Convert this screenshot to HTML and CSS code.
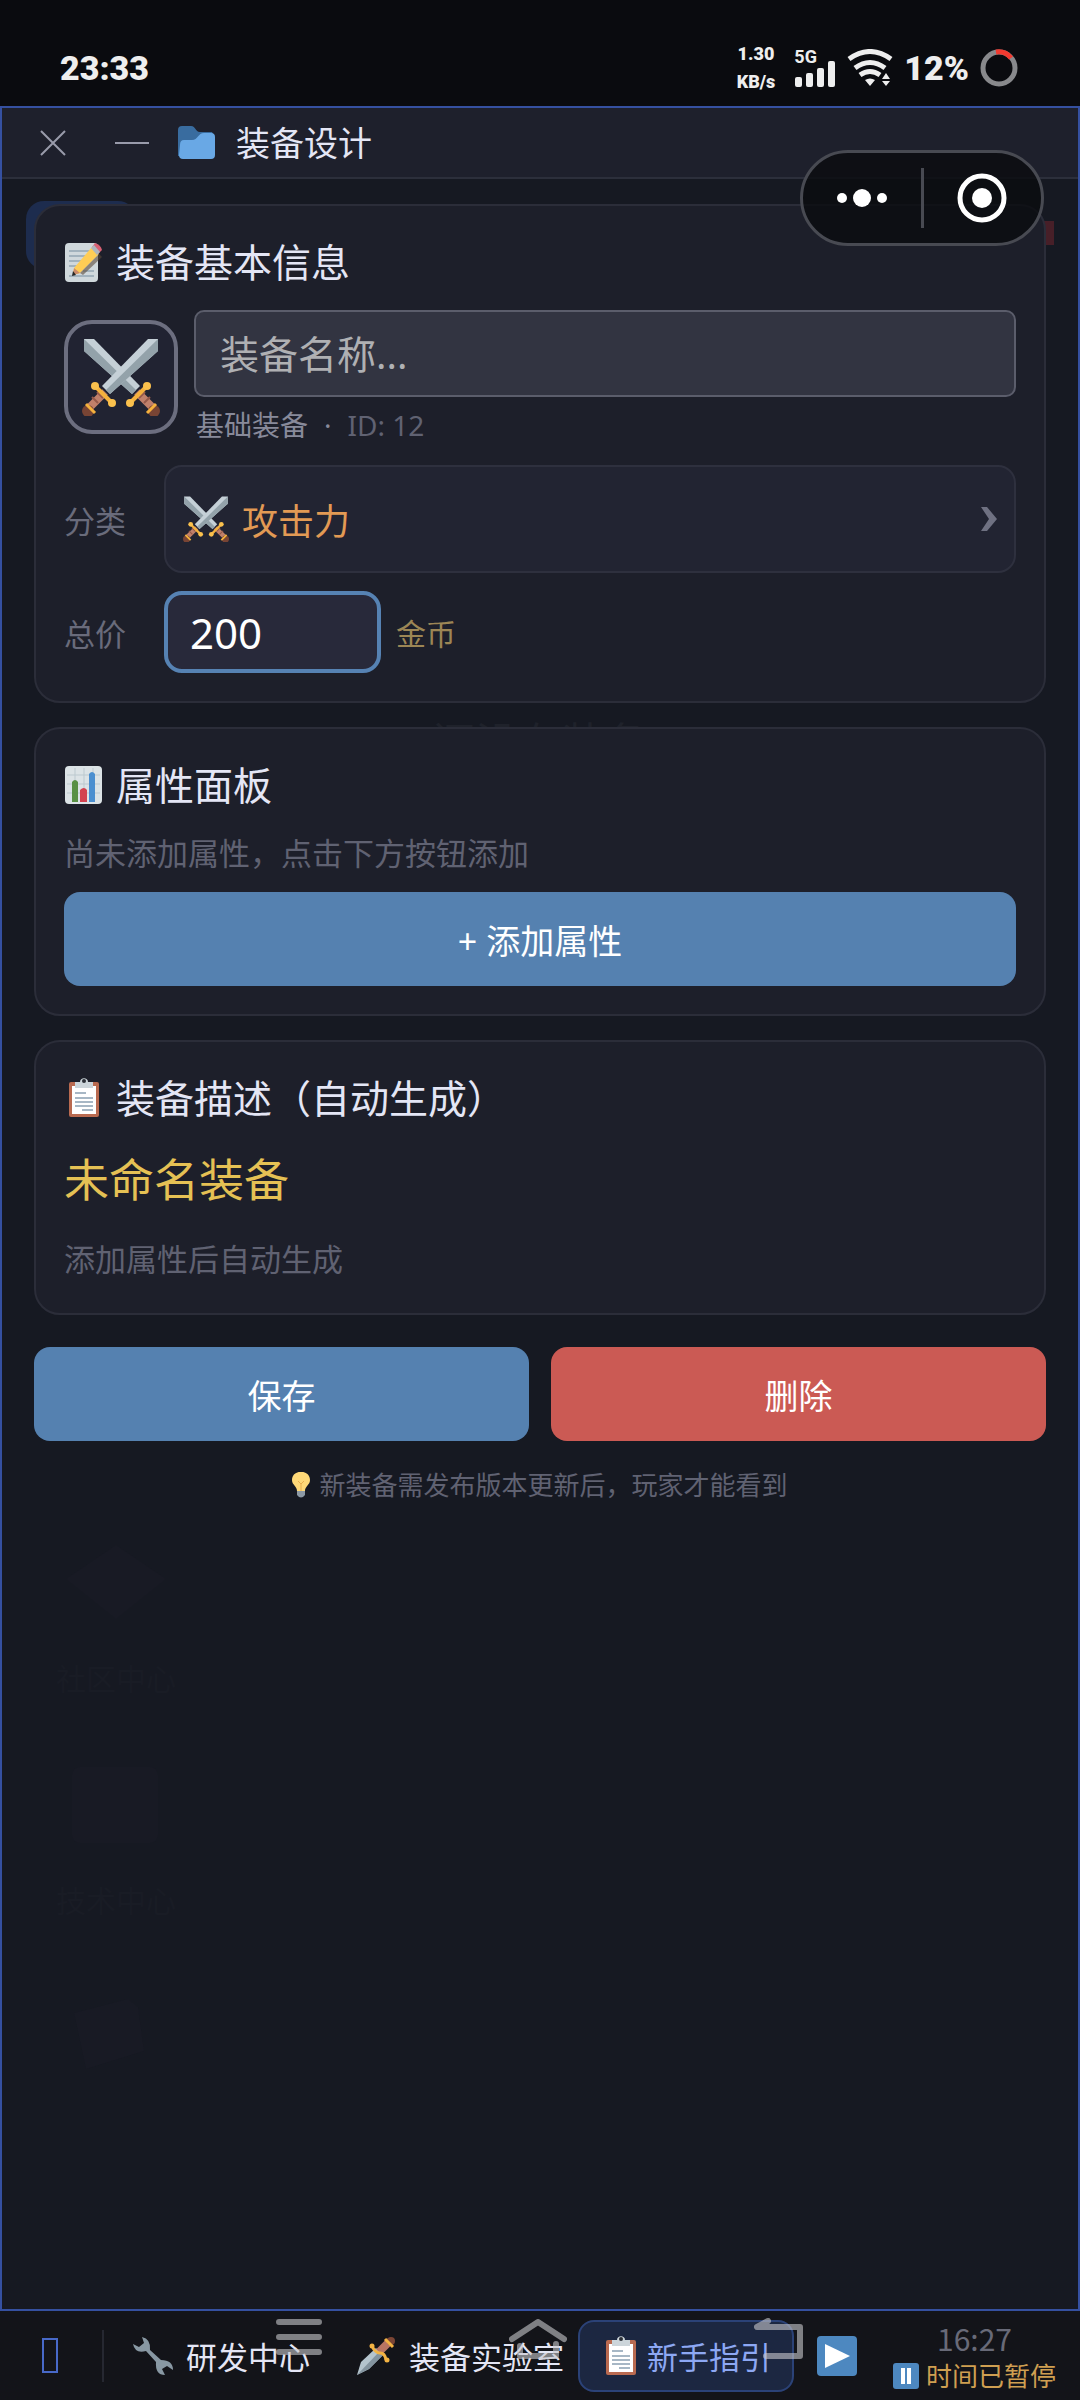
FILE: index.html
```
<!DOCTYPE html>
<html lang="zh-CN">
<head>
  <meta charset="UTF-8" />
  <meta name="viewport" content="width=device-width, initial-scale=1.0"/>
  <title>装备设计</title>
  <link rel="stylesheet" href="styles.css">
</head>
<body>
  <svg class="defs" aria-hidden="true">
    <symbol id="swords" viewBox="0 0 78 78">
      <path d="M2 1h10l46 47-8 8L2 13z" fill="#c5d0d7"/>
      <path d="M2 1v12l48 43 4-4z" fill="#93a2aa"/>
      <path d="M55 54l15 15" stroke="#c0806b" stroke-width="8"/>
      <path d="M57 60l6-6M62 65l6-6" stroke="#96594a" stroke-width="2"/>
      <path d="M48 65l18-18" stroke="#f5b13d" stroke-width="4"/>
      <circle cx="48" cy="65" r="4" fill="#fbc14d"/><circle cx="65" cy="48" r="4" fill="#fbc14d"/>
      <circle cx="72" cy="73" r="6" fill="#784434"/>
      <path d="M65 75l9-9" stroke="#f5b13d" stroke-width="3"/>
      <path d="M76 1H66L20 48l8 8 48-43z" fill="#c5d0d7"/>
      <path d="M76 1v12L28 56l-4-4z" fill="#93a2aa"/>
      <path d="M23 54L8 69" stroke="#c0806b" stroke-width="8"/>
      <path d="M21 60l-6-6M16 65l-6-6" stroke="#96594a" stroke-width="2"/>
      <path d="M30 65L12 47" stroke="#f5b13d" stroke-width="4"/>
      <circle cx="30" cy="65" r="4" fill="#fbc14d"/><circle cx="13" cy="48" r="4" fill="#fbc14d"/>
      <circle cx="6" cy="73" r="6" fill="#784434"/>
      <path d="M13 75l-9-9" stroke="#f5b13d" stroke-width="3"/>
    </symbol>
    <symbol id="clipboard" viewBox="0 0 40 40">
      <rect x="5" y="4" width="30" height="35" rx="2" fill="#b96a50"/>
      <path d="M8 8h24v28H8z" fill="#fff"/>
      <path d="M11 4h5c0-5 8-5 8 0h5v6H11z" fill="#ccd5da"/>
      <circle cx="20" cy="3" r="2" fill="#2b2f36"/>
      <path d="M11 15h11M11 20h18M11 24h18M11 28h18M18 32h11" stroke="#8ba0b3" stroke-width="1.5"/>
    </symbol>
  </svg>

  <header class="status-bar">
    <span class="clock">23:33</span>
    <div class="status-right">
      <div class="speed"><span>1.30</span><span>KB/s</span></div>
      <div class="signal">
        <span>5G</span>
        <svg width="42" height="26" viewBox="0 0 42 26" fill="#eee">
          <rect x="1" y="16" width="7" height="10" rx="2"/><rect x="12" y="12" width="7" height="14" rx="2"/>
          <rect x="23" y="7" width="7" height="19" rx="2"/><rect x="34" y="0" width="7" height="26" rx="2"/>
        </svg>
      </div>
      <svg width="46" height="38" viewBox="0 0 46 38" fill="none" stroke="#eee" stroke-width="5">
        <path d="M2 10Q23-5 44 10M8 19q15-11 30 0M13 26q10-7 20 0"/>
        <path d="M18 31q5-3 10 0l-5 6zM35 30l4-6 4 6zM35 32l4 5 4-5z" fill="#eee" stroke="none"/>
      </svg>
      <span class="battery">12%</span>
      <svg width="38" height="38" viewBox="0 0 38 38" fill="none" stroke-width="5">
        <circle cx="19" cy="19" r="16" stroke="#88898c"/>
        <path d="M16 3a16 16 0 0 1 15 6" stroke="#f23a30"/>
      </svg>
    </div>
  </header>

  <main class="window">
    <div class="title-bar">
      <button class="win-btn" aria-label="关闭"><svg width="26" height="26" viewBox="0 0 26 26"><path d="M1 1l24 24M25 1L1 25"/></svg></button>
      <button class="win-btn minimize" aria-label="最小化"><svg width="34" height="26" viewBox="0 0 34 26"><path d="M0 13h34"/></svg></button>
      <svg width="38" height="34" viewBox="0 0 38 34">
        <path d="M4 0h9c5 0 4 6 9 6h12l2 4v20H0V4q0-4 4-4z" fill="#396c9f"/>
        <path d="M2 19q0-5 4-5h8c6 0 6-7 12-7h7q4 0 4 4v18q0 4-4 4H5q-4 0-4-4z" fill="#69a8e5"/>
      </svg>
      <h1>装备设计</h1>
    </div>

    <!-- dimmed desktop under the window -->
    <div class="desktop" aria-hidden="true">
      <div class="ghost-tab"></div>
      <div class="ghost-flag"></div>
      <div class="ghost-empty">还没有装备</div>
      <div class="ghost-app app-community"><svg width="100" height="76" viewBox="0 0 100 76"><path d="M0 34L50 0l50 34-50 40z"/></svg>社区中心</div>
      <div class="ghost-app app-tech"><svg width="100" height="76" viewBox="0 0 100 76"><rect x="6" width="86" height="76" rx="8"/></svg>技术中心</div>
      <div class="ghost-app app-tag"><svg width="100" height="76" viewBox="0 0 100 76"><path d="M8 18L62 4l10 8 6 44L20 74z"/></svg></div>
    </div>

    <div class="content">
      <section class="card">
        <h2>
          <svg width="40" height="40" viewBox="0 0 40 40">
            <rect x="1" y="1" width="33" height="39" rx="4" fill="#d0d8dc"/>
            <path d="M5 9h21M5 14h17M5 19h14M5 24h9M19 29h11M5 34h25" stroke="#92a5b2" stroke-width="1.5"/>
            <path d="M10 26L28 5l7 7-19 19-7 2z" fill="#ffcd55"/>
            <path d="M16 31L35 12l3 3-19 18z" fill="#5a4a3a" opacity=".6"/>
            <path d="M28 5l3-4q6 2 7 7l-4 4z" fill="#d96073"/><path d="M27 6l3-3 6 7-3 3z" fill="#aeb6bd"/>
            <path d="M10 26l6 5-7 2z" fill="#cb8a68"/><path d="M9 29l3 4-4 1z" fill="#252525"/>
          </svg>
          装备基本信息
        </h2>
        <div class="profile">
          <button class="equip-icon" aria-label="装备图标"><svg width="78" height="78"><use href="#swords"/></svg></button>
          <div class="profile-info">
            <input class="name-input" type="text" placeholder="装备名称..." aria-label="装备名称">
            <div class="meta"><span>基础装备</span><span>·</span><span class="meta-id">ID: 12</span></div>
          </div>
        </div>
        <div class="row row-category">
          <label for="category">分类</label>
          <button class="category" id="category">
            <svg width="46" height="46"><use href="#swords"/></svg>
            攻击力
            <svg class="chevron" width="16" height="26" viewBox="0 0 16 26"><path d="M0 1h6l10 12L6 25H0l8-12z" fill="#6f7182"/></svg>
          </button>
        </div>
        <div class="row row-price">
          <label for="price">总价</label>
          <input class="price-input" id="price" type="text" inputmode="numeric" value="200">
          <span class="unit">金币</span>
        </div>
      </section>

      <section class="card">
        <h2>
          <svg width="40" height="40" viewBox="0 0 40 40">
            <rect x="1" y="1" width="37" height="38" rx="4" fill="#dce3e6"/>
            <path d="M3 10h33M3 19h33M3 28h33M11 3v34M20 3v34M29 3v34" stroke="#bcc9cf"/>
            <path d="M8 37V17q3-4 6 0v20z" fill="#599044"/><path d="M16 37V25q4-4 7 0v12z" fill="#d3424f"/><path d="M25 37V9q3-4 6 0v28z" fill="#4b8fd0"/>
          </svg>
          属性面板
        </h2>
        <p class="muted">尚未添加属性，点击下方按钮添加</p>
        <button class="btn add-btn">+ 添加属性</button>
      </section>

      <section class="card">
        <h2><svg width="40" height="40"><use href="#clipboard"/></svg>装备描述（自动生成）</h2>
        <p class="equip-name">未命名装备</p>
        <p class="muted">添加属性后自动生成</p>
      </section>

      <div class="actions">
        <button class="btn">保存</button>
        <button class="btn danger">删除</button>
      </div>
      <p class="hint">
        <svg width="18" height="26" viewBox="0 0 18 26"><path d="M5 19C5 14 0 13 0 8 0-3 18-3 18 8c0 5-5 6-5 11z" fill="#ffd978"/><path d="M6 9l3 3 3-3M9 12v7" fill="none" stroke="#e8ae4e"/><path d="M5 19h8v4q-4 5-8 0z" fill="#8c99a5"/></svg>
        新装备需发布版本更新后，玩家才能看到
      </p>
    </div>
  </main>

  <div class="capsule">
    <button aria-label="更多"><svg width="52" height="20" viewBox="0 0 52 20" fill="#fff"><circle cx="6" cy="10" r="5"/><circle cx="26" cy="10" r="9"/><circle cx="46" cy="10" r="5"/></svg></button>
    <button aria-label="关闭小程序"><svg width="50" height="50" viewBox="0 0 50 50"><circle cx="25" cy="25" r="22" fill="none" stroke="#fff" stroke-width="5"/><circle cx="25" cy="25" r="10" fill="#fff"/></svg></button>
  </div>

  <footer class="taskbar">
    <button class="start" aria-label="开始"><svg width="16" height="36" viewBox="0 0 16 36"><rect x="1" y="1" width="14" height="33" fill="none" stroke="#4869c8" stroke-width="2"/></svg></button>
    <button class="task">
      <svg width="40" height="40" viewBox="0 0 40 40"><path d="M9 1q9 2 8 13l11 10q12 0 12 10l-6-4-5 3 3 6q-10 0-9-13L13 15Q2 18 0 8l6 3 5-4z" fill="#8898a3"/></svg>
      研发中心
    </button>
    <button class="task">
      <svg width="40" height="40" viewBox="0 0 40 40">
        <path d="M1 39l4-13 15-14 7 7-14 14z" fill="#b4c4cd"/><path d="M1 39L23 16l4 3-14 14z" fill="#84949f"/>
        <path d="M23 16L34 5" stroke="#b87563" stroke-width="8"/><circle cx="35" cy="5" r="4" fill="#7b4535"/>
        <path d="M16 10q3 7 8 7t6 7M29 3l8 8" fill="none" stroke="#f3b343" stroke-width="3"/><circle cx="16" cy="10" r="2.5" fill="#f3b343"/><circle cx="31" cy="24" r="2.5" fill="#f3b343"/>
      </svg>
      装备实验室
    </button>
    <button class="task active"><svg width="40" height="40"><use href="#clipboard"/></svg>新手指引</button>
    <button class="play" aria-label="继续"><svg width="40" height="40" viewBox="0 0 40 40"><rect width="40" height="40" rx="4" fill="#4d88c0"/><path d="M8 8l25 12L8 32z" fill="#fff"/></svg></button>
    <div class="tray">
      <span class="tray-time">16:27</span>
      <span class="tray-state"><svg width="26" height="26" viewBox="0 0 26 26"><rect width="26" height="26" rx="3" fill="#4d88c0"/><path d="M10 5v16M16 5v16" stroke="#fff" stroke-width="4"/></svg>时间已暂停</span>
    </div>
    <nav class="sys-nav">
      <svg width="46" height="44" viewBox="0 0 46 44"><path d="M3 4h40M3 19h40M3 34h40"/></svg>
      <svg width="60" height="44" viewBox="0 0 60 44"><path d="M4 21L30 4l26 17M12 28v10h36V26"/></svg>
      <svg width="50" height="44" viewBox="0 0 50 44"><path d="M14 3L3 9h43v29H12"/></svg>
    </nav>
  </footer>
</body>
</html>
```
FILE: styles.css
```
* {
  box-sizing: border-box;
}

body {
  margin: 0;
  min-height: 100vh;
  display: flex;
  flex-direction: column;
  position: relative;
  background: #161922;
  color: #e4e6f5;
  font-family: "Noto Sans", "Noto Sans CJK SC", sans-serif;
}

button, input {
  font-family: inherit;
  margin: 0;
}

button {
  border: none;
  background: none;
  padding: 0;
  color: inherit;
}

h1, h2, p {
  margin: 0;
  font-weight: 400;
}

svg {
  display: block;
  flex-shrink: 0;
}

.defs {
  position: absolute;
  width: 0;
  height: 0;
}

/* phone status bar */
.status-bar {
  height: 106px;
  padding: 36px 62px 0 60px;
  display: flex;
  justify-content: space-between;
  align-items: flex-start;
  background: #0a0b0f;
  color: #eee;
  font-family: Roboto, sans-serif;
  font-weight: 900;
}

.clock, .battery {
  font-size: 34px;
  line-height: 64px;
}

.status-right {
  display: flex;
  align-items: center;
  gap: 11px;
}

.speed {
  display: flex;
  flex-direction: column;
  align-items: center;
  margin-right: 8px;
  font-size: 18px;
  line-height: 28px;
}

.signal {
  padding-top: 2px;
  font-size: 18px;
  font-weight: 700;
  line-height: 12px;
}

.signal svg {
  margin-top: -2px;
}

/* window */
.window {
  flex: 1;
  position: relative;
  border: 2px solid #3550a0;
}

.title-bar {
  display: flex;
  align-items: center;
  height: 71px;
  padding: 0 38px;
  background: #1e202c;
  border-bottom: 2px solid #2c2f3b;
}

.title-bar h1 {
  margin-left: 20px;
  font-size: 34px;
  line-height: 48px;
}

.win-btn svg {
  fill: none;
  stroke: #999bab;
  stroke-width: 2;
}

.minimize {
  margin: 0 29px 0 49px;
}

.desktop {
  position: absolute;
  inset: 71px 0 0 0;
  overflow: hidden;
  font-size: 30px;
  line-height: 44px;
  color: #191c25;
}

.desktop > div {
  position: absolute;
}

.ghost-tab {
  left: 24px;
  top: 22px;
  width: 110px;
  height: 68px;
  border-radius: 18px;
  background: #1d2c4e;
}

.ghost-flag {
  right: 24px;
  top: 42px;
  width: 12px;
  height: 24px;
  background: #471f28;
}

.ghost-empty {
  width: 100%;
  top: 542px;
  text-align: center;
  font-size: 43px;
  color: #1f222b;
}

.ghost-app {
  left: 54px;
}

.ghost-app svg {
  margin: 0 0 36px 10px;
  fill: #181a24;
}

.app-community {
  top: 1366px;
}

.app-tech {
  top: 1588px;
}

.app-tag {
  top: 1816px;
}

.content {
  position: relative;
  padding: 25px 32px;
}

.card {
  margin-bottom: 24px;
  padding: 32px 28px 28px;
  background: #1d1f2a;
  border: 2px solid #2b2d39;
  border-radius: 26px;
}

.card h2 {
  display: flex;
  align-items: center;
  gap: 12px;
  font-size: 39px;
  line-height: 48px;
}

.profile {
  display: flex;
  align-items: center;
  gap: 16px;
  margin-top: 24px;
}

.equip-icon {
  width: 114px;
  height: 114px;
  display: flex;
  align-items: center;
  justify-content: center;
  background: #212332;
  border: 4px solid #6c6e7f;
  border-radius: 28px;
}

.profile-info {
  flex: 1;
}

.name-input {
  display: block;
  width: 100%;
  height: 87px;
  padding: 0 24px;
  background: #323441;
  border: 2px solid #5b5d6b;
  border-radius: 10px;
  color: #fff;
  font-size: 39px;
}

.name-input::placeholder {
  color: #afb0b3;
  opacity: 1;
}

.meta {
  display: flex;
  gap: 16px;
  margin-top: 10px;
  padding-left: 2px;
  font-size: 28px;
  line-height: 36px;
  color: #888a9a;
}

.meta-id {
  color: #606272;
}

.row {
  display: flex;
  align-items: center;
  margin-top: 18px;
}

.row-category {
  margin-top: 22px;
}

.row label {
  width: 100px;
  font-size: 31px;
  color: #696b7b;
}

.category {
  flex: 1;
  display: flex;
  align-items: center;
  gap: 13px;
  height: 108px;
  padding: 0 17px;
  background: #222432;
  border: 2px solid #2e303e;
  border-radius: 18px;
  font-size: 36px;
  color: #e29a54;
}

.chevron {
  margin-left: auto;
}

.price-input {
  width: 217px;
  height: 82px;
  padding: 0 22px;
  background: #28293a;
  border: 4px solid #5682b3;
  border-radius: 18px;
  color: #fff;
  font-size: 42px;
}

.unit {
  margin-left: 15px;
  font-size: 30px;
  color: #9c8655;
}

.muted {
  margin-top: 22px;
  font-size: 31px;
  line-height: 44px;
  color: #606272;
}

.btn {
  flex: 1;
  height: 94px;
  background: #5581b0;
  border-radius: 16px;
  color: #fff;
  font-size: 34px;
}

.danger {
  background: #cb5a54;
}

.add-btn {
  width: 100%;
  margin-top: 17px;
}

.equip-name {
  margin-top: 26px;
  font-size: 45px;
  line-height: 64px;
  color: #e5c154;
}

.equip-name + .muted {
  margin-top: 25px;
  margin-bottom: 4px;
}

.actions {
  display: flex;
  gap: 22px;
  margin-top: 32px;
}

.hint {
  display: flex;
  justify-content: center;
  align-items: center;
  gap: 9px;
  margin-top: 24px;
  font-size: 26px;
  line-height: 40px;
  color: #606272;
}

/* mini program capsule, floats over the window */
.capsule {
  position: absolute;
  top: 150px;
  right: 36px;
  width: 244px;
  height: 96px;
  display: flex;
  align-items: center;
  background: rgba(10, 11, 15, 0.8);
  border: 3px solid #484a52;
  border-radius: 48px;
}

.capsule button {
  flex: 1;
  height: 60px;
  display: flex;
  align-items: center;
  justify-content: center;
}

.capsule button + button {
  border-left: 3px solid #484a52;
}

/* taskbar */
.taskbar {
  position: relative;
  display: flex;
  align-items: center;
  height: 89px;
  padding-right: 24px;
  background: #131419;
  font-size: 31px;
}

.start {
  width: 104px;
  height: 52px;
  padding-left: 42px;
  border-right: 2px solid #262831;
}

.task {
  display: flex;
  align-items: center;
  gap: 13px;
  height: 72px;
  padding-left: 29px;
  font-size: 31px;
}

.task + .task {
  padding-left: 46px;
}

.task + .active {
  margin-left: 14px;
  padding: 0 21px;
  gap: 6px;
  background: #1c2741;
  border: 2px solid #2b4277;
  border-radius: 16px;
  color: #8da8f3;
}

.play {
  margin-left: 23px;
}

.tray {
  display: flex;
  flex-direction: column;
  align-items: center;
  margin-left: auto;
}

.tray-time {
  font-family: "Noto Sans CJK SC", sans-serif;
  font-size: 30px;
  line-height: 40px;
  color: #686a78;
}

.tray-state {
  display: flex;
  align-items: center;
  gap: 7px;
  font-size: 26px;
  line-height: 36px;
  color: #cf9f51;
}

.sys-nav {
  position: absolute;
  left: 17%;
  right: 17%;
  top: 7px;
  display: flex;
  justify-content: space-around;
  pointer-events: none;
}

.sys-nav svg {
  fill: none;
  stroke: #c8c8cc;
  stroke-width: 6;
  stroke-linecap: round;
  stroke-linejoin: round;
  opacity: 0.6;
}
```
